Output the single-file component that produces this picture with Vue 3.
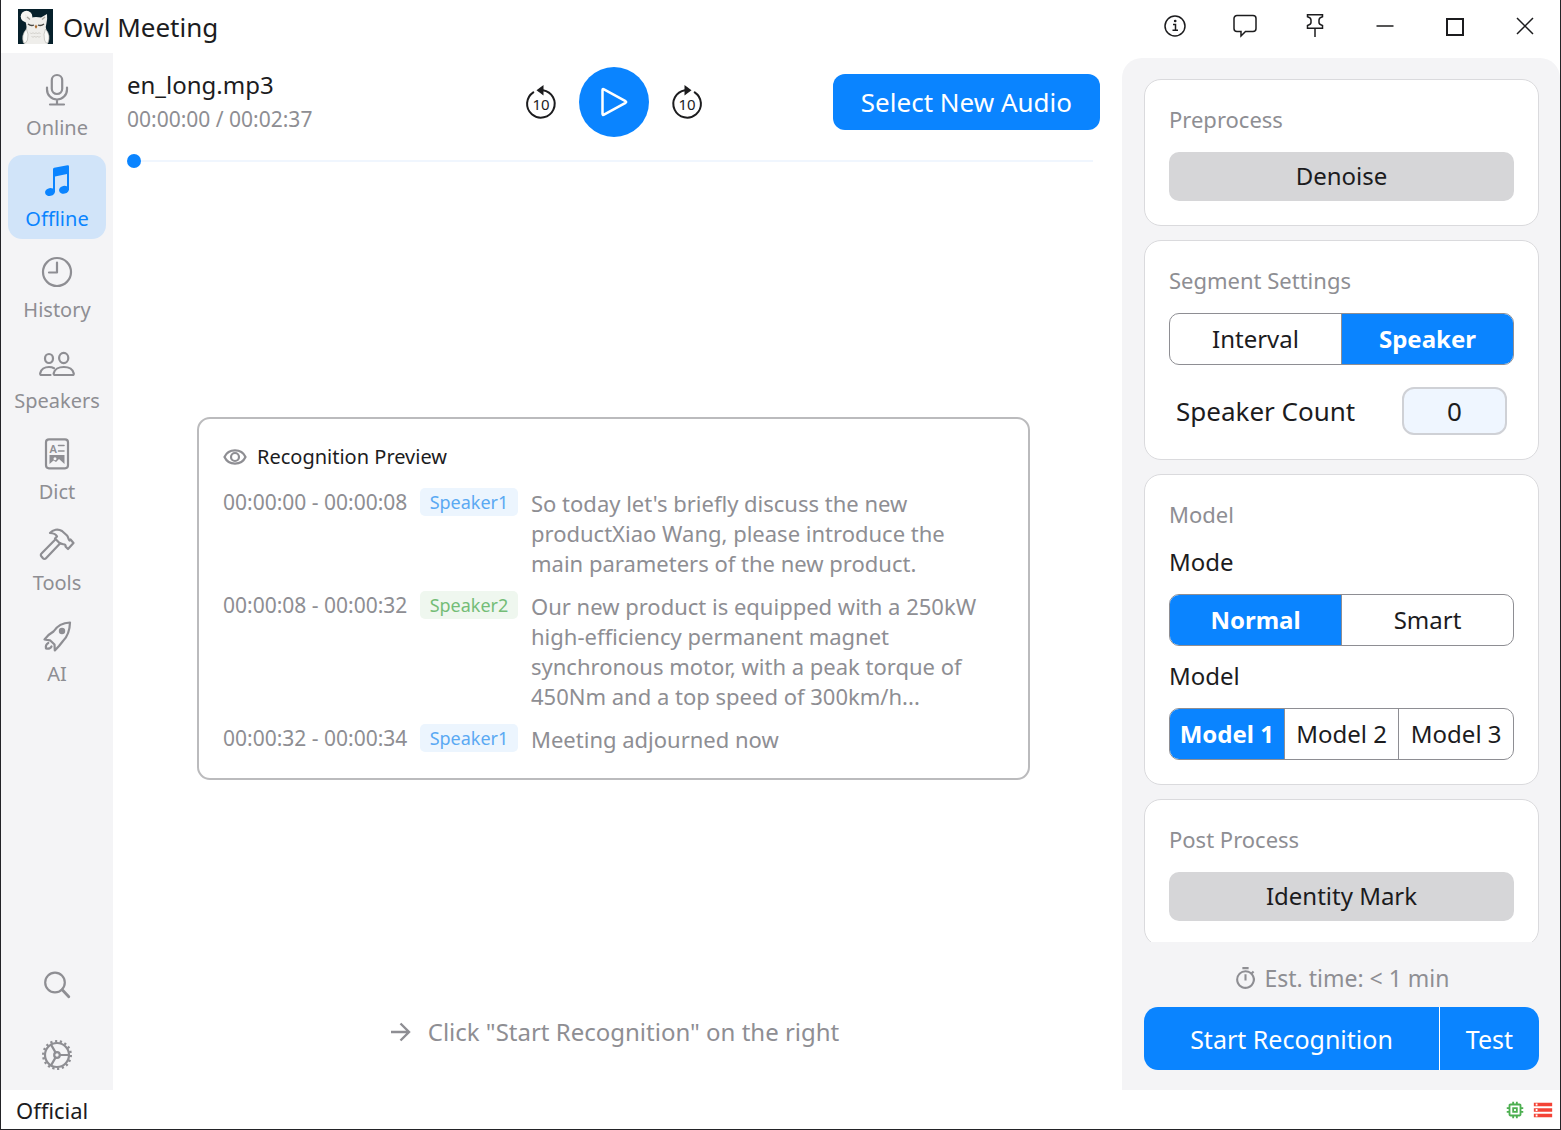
<script setup>
import { ref } from 'vue'

const navItems = ['Online', 'Offline', 'History', 'Speakers', 'Dict', 'Tools', 'AI']
const activeNav = ref('Offline')

const segments = [
  { time: '00:00:00 - 00:00:08', speaker: 'Speaker1', tone: 'blue', text: "So today let's briefly discuss the new productXiao Wang, please introduce the main parameters of the new product." },
  { time: '00:00:08 - 00:00:32', speaker: 'Speaker2', tone: 'green', text: 'Our new product is equipped with a 250kW high-efficiency permanent magnet synchronous motor, with a peak torque of 450Nm and a top speed of 300km/h...' },
  { time: '00:00:32 - 00:00:34', speaker: 'Speaker1', tone: 'blue', text: 'Meeting adjourned now' },
]

const position = ref(0)
const splitBy = ref('Speaker')
const mode = ref('Normal')
const model = ref('Model 1')
const speakerCount = ref('0')
</script>

<template>
  <div class="window">
    <header class="titlebar">
      <svg class="logo" viewBox="0 0 35 35" aria-hidden="true">
        <rect width="35" height="35" fill="#06202b" />
        <circle cx="8.5" cy="7.5" r="5.8" fill="#f6f5f1" />
        <path d="M7 5 L13 8.500 Q18 7.500 23 8.500 L29 5 Q29.500 10 28.500 14 Q27 18 28.500 22 Q31.500 28 29.500 35 H6.500 Q4 28 7.500 22 Q9.500 18 7.500 13 Q6.500 9 7 5Z" fill="#efeeeb" />
        <path d="M8.500 20 Q3 26 5.500 34 Q8 35 9.500 31 Q11 25 8.500 20Z M27.500 20 Q33 26 30 34 Q27.500 35 26.500 31 Q25 25 27.500 20Z" fill="#fafaf8" stroke="#b9b8b2" stroke-width=".7" />
        <path d="M9 8 L12 10.500 M27 8 L24 10.500" stroke="#aaa79f" stroke-width="1.300" />
        <path d="M10 15 q3 2.400 6 1 M20 16 q3 1.400 6-1" fill="none" stroke="#484844" stroke-width="1.300" />
        <path d="M18 15.500 l1.300 2.200 -1.300 2 -1.300-2z" fill="#aa6a2c" />
        <path d="M12 23.500 l1.500 1.500 1.500-1.500 1.500 1.500 1.500-1.500 1.500 1.500 1.500-1.500 1.500 1.500 M13.500 27 l1.500 1.500 1.500-1.500 1.500 1.500 1.500-1.500 1.500 1.500 1.500-1.500" fill="none" stroke="#c9c7c2" stroke-width=".8" />
      </svg>
      <h1>Owl Meeting</h1>
      <div class="window-tools">
        <button type="button" aria-label="About">
          <svg viewBox="0 0 24 24"><circle cx="12" cy="12" r="10" /><path d="M10 10.500h2.500v5.500M9.500 16.200h5.500" /><circle cx="12.200" cy="7" r=".6" fill="currentColor" /></svg>
        </button>
        <button type="button" aria-label="Feedback">
          <svg viewBox="0 0 24 24"><path d="M4 1.500h16a3 3 0 0 1 3 3v10a3 3 0 0 1-3 3h-7.500L8 22v-4.500H4a3 3 0 0 1-3-3v-10a3 3 0 0 1 3-3z" /></svg>
        </button>
        <button type="button" aria-label="Pin">
          <svg viewBox="0 0 24 24"><path d="M4.500 .8h15v2q-3.500 1-3.500 3.200v2.500q0 2 3.500 3v2.800h-15v-2.800q3.500-1 3.500-3V6q0-2.200-3.500-3.200zM12 14.300V23" /></svg>
        </button>
        <button type="button" aria-label="Minimize">
          <svg viewBox="0 0 24 24"><path d="M3.500 12h17" /></svg>
        </button>
        <button type="button" aria-label="Maximize">
          <svg viewBox="0 0 24 24"><rect x="4" y="5" width="16" height="16" stroke-width="2" /></svg>
        </button>
        <button type="button" aria-label="Close">
          <svg viewBox="0 0 24 24"><path d="M4 4l16 16M20 4L4 20" /></svg>
        </button>
      </div>
    </header>

    <div class="body">
      <nav class="sidebar">
        <button
          v-for="item in navItems"
          :key="item"
          type="button"
          class="nav-item"
          :class="{ active: item === activeNav }"
          @click="activeNav = item"
        >
          <svg viewBox="0 0 36 36" aria-hidden="true">
            <g v-if="item === 'Online'">
              <rect x="12.800" y="3" width="10.400" height="19" rx="5.200" />
              <path d="M8 15.500v2a10 10 0 0 0 20 0v-2M18 27.500v5M11 32.500h14" />
            </g>
            <g v-else-if="item === 'Offline'" class="solid">
              <path d="M14 6.200Q14 5 15.200 4.800L28.500 2.300Q30 2 30 3.500V27H28V11L16 13.500V29H14z" />
              <ellipse cx="11" cy="29" rx="5" ry="3.900" transform="rotate(-12 11 29)" />
              <ellipse cx="25" cy="26.700" rx="5" ry="3.900" transform="rotate(-12 25 26.700)" />
            </g>
            <g v-else-if="item === 'History'">
              <circle cx="18" cy="18" r="14" />
              <path d="M18 8.500v10h-8" />
            </g>
            <g v-else-if="item === 'Speakers'">
              <ellipse cx="24.700" cy="13" rx="4.600" ry="5.100" />
              <ellipse cx="10" cy="13.500" rx="4" ry="4.500" />
              <path d="M16.200 30H33.500q1.500 0 1.200-1.800C33.800 24.500 30 22 24.800 22s-9.300 2.500-10.100 6.200q-.2 1.800 1.500 1.800z" />
              <path d="M11.500 30H2.500q-1.500 0-1.300-1.800C2 24.500 5.500 22 10 22c2.200 0 3.500.3 5 1.200" />
            </g>
            <g v-else-if="item === 'Dict'">
              <rect x="7" y="3.300" width="22" height="29" rx="3" />
              <text x="10.500" y="16.500" class="glyph">A</text>
              <path d="M19.500 9.500h5.500M19.500 15h5.500" stroke-width="1.600" />
              <path class="solid" fill-rule="evenodd" d="M10.500 19h15v9l-5.500-5-3 3-2.500-1.500L10.500 28zM16 21.300a1.500 1.500 0 1 0 0 3 1.500 1.500 0 1 0 0-3z" />
            </g>
            <g v-else-if="item === 'Tools'">
              <path d="M11 6C14 2.500 19 1.500 23 4l5 4.500c1.500 1.700 1 3.500 2.500 5l1-1 3 3.500-5.500 6-2.500-2.500c1-3-3-1.500-6-3.500L16 11.500l2-2C17 7 14.500 6.200 11 6z" />
              <path d="M16.300 12.500L2.500 26.500a2 2 0 0 0 0 3l1.500 1.800a2 2 0 0 0 3 0L21 16.500" />
            </g>
            <g v-else>
              <path d="M31 4.500C24 4.700 18.500 7.300 14.500 13.500L9.500 17 5.500 21.500l5.500.8 4.500 4.200.3 6 4.200-4.500 4-5C28.500 18.500 30.800 12 31 4.500z" />
              <circle class="solid" cx="23" cy="13" r="3.200" />
              <path d="M9.300 25c-2 1-2.800 3-2.300 5.500 2.500.5 4.500 0 5.500-2" />
            </g>
          </svg>
          <span>{{ item }}</span>
        </button>

        <div class="nav-bottom">
          <button type="button" class="nav-tool" aria-label="Search">
            <svg viewBox="0 0 36 36"><circle cx="16" cy="15.500" r="9.800" /><path d="M23.200 22.700l6.600 7" stroke-width="2.800" /></svg>
          </button>
          <button type="button" class="nav-tool" aria-label="Settings">
            <svg viewBox="0 0 36 36">
              <circle cx="18" cy="18" r="12" />
              <circle cx="18" cy="18" r="13.800" stroke-width="2.400" stroke-dasharray="2.200 2.617" stroke-linecap="butt" />
              <circle cx="18" cy="18" r="2.800" />
              <path d="M21 18h9M16.500 15.400L12 7.600M16.500 20.600L12 28.400" />
            </svg>
          </button>
        </div>
      </nav>

      <main class="main">
        <section class="player">
          <div class="track-info">
            <h2>en_long.mp3</h2>
            <p>00:00:00 / 00:02:37</p>
          </div>
          <div class="transport">
            <button type="button" class="skip" aria-label="Back 10 seconds">
              <svg viewBox="0 0 34 36">
                <path d="M19 6.200A13.800 13.800 0 1 1 9.300 8.300" />
                <path class="solid" d="M19.500 1v10.500L12.500 6.200z" />
                <text x="17" y="25.500" text-anchor="middle">10</text>
              </svg>
            </button>
            <button type="button" class="play" aria-label="Play">
              <svg viewBox="0 0 36 36"><path d="M6.500 6.200Q6.500 4.500 8 5.300L29.500 17.200q1.300.8 0 1.600L8 30.700Q6.500 31.500 6.500 29.800z" /></svg>
            </button>
            <button type="button" class="skip" aria-label="Forward 10 seconds">
              <svg viewBox="0 0 34 36">
                <path d="M15 6.200A13.800 13.800 0 1 0 24.700 8.300" />
                <path class="solid" d="M14.500 1v10.500l7-5.300z" />
                <text x="17" y="25.500" text-anchor="middle">10</text>
              </svg>
            </button>
          </div>
          <button type="button" class="select-audio">Select New Audio</button>
        </section>
        <input v-model="position" class="seek" type="range" min="0" max="157" aria-label="Playback position" />

        <div class="stage">
          <section class="preview">
            <h3>
              <svg viewBox="0 0 24 24" aria-hidden="true"><path d="M1.500 12C5.500 3.200 18.500 3.200 22.500 12 18.500 20.800 5.500 20.800 1.500 12z" /><circle cx="12" cy="12" r="4" /></svg>
              Recognition Preview
            </h3>
            <div v-for="segment in segments" :key="segment.time" class="segment">
              <time>{{ segment.time }}</time>
              <span class="chip" :class="segment.tone">{{ segment.speaker }}</span>
              <p>{{ segment.text }}</p>
            </div>
          </section>
        </div>

        <p class="hint">
          <svg viewBox="0 0 24 24" aria-hidden="true"><path d="M3 12h17.500M12.500 3.500l8.500 8.500-8.500 8.500" /></svg>
          Click "Start Recognition" on the right
        </p>
      </main>

      <aside class="panel">
        <div class="cards">
          <section class="card">
            <h3>Preprocess</h3>
            <button type="button" class="toggle">Denoise</button>
          </section>

          <section class="card">
            <h3>Segment Settings</h3>
            <div class="segmented" role="group" aria-label="Segment by">
              <button v-for="o in ['Interval', 'Speaker']" :key="o" type="button" :aria-pressed="splitBy === o" @click="splitBy = o">{{ o }}</button>
            </div>
            <div class="count-row">
              <label for="speaker-count">Speaker Count</label>
              <input id="speaker-count" v-model="speakerCount" type="text" inputmode="numeric" />
            </div>
          </section>

          <section class="card">
            <h3>Model</h3>
            <h4>Mode</h4>
            <div class="segmented" role="group" aria-label="Mode">
              <button v-for="o in ['Normal', 'Smart']" :key="o" type="button" :aria-pressed="mode === o" @click="mode = o">{{ o }}</button>
            </div>
            <h4>Model</h4>
            <div class="segmented" role="group" aria-label="Model">
              <button v-for="o in ['Model 1', 'Model 2', 'Model 3']" :key="o" type="button" :aria-pressed="model === o" @click="model = o">{{ o }}</button>
            </div>
          </section>

          <section class="card">
            <h3>Post Process</h3>
            <button type="button" class="toggle">Identity Mark</button>
          </section>
        </div>

        <div class="run">
          <p>
            <svg viewBox="0 0 24 24" aria-hidden="true"><path d="M15 1H9v2h6V1zm-4 13h2V8h-2v6zm8.030-6.610 1.420-1.420c-.43-.51-.9-.99-1.410-1.410l-1.420 1.420A8.962 8.962 0 0 0 12 4a9 9 0 0 0-9 9c0 4.970 4.020 9 9 9a8.994 8.994 0 0 0 7.030-14.610zM12 20c-3.870 0-7-3.130-7-7s3.130-7 7-7 7 3.130 7 7-3.130 7-7 7z" /></svg>
            Est. time: &lt; 1 min
          </p>
          <div class="run-buttons">
            <button type="button" class="start">Start Recognition</button>
            <button type="button" class="test">Test</button>
          </div>
        </div>
      </aside>
    </div>

    <footer class="status">
      <span>Official</span>
      <div class="status-icons">
        <svg viewBox="0 0 24 24" fill="#4caf50" aria-hidden="true"><path d="M15 9H9v6h6V9zm-2 4h-2v-2h2v2zm8-2V9h-2V7c0-1.100-.9-2-2-2h-2V3h-2v2h-2V3H9v2H7c-1.100 0-2 .9-2 2v2H3v2h2v2H3v2h2v2c0 1.100.9 2 2 2h2v2h2v-2h2v2h2v-2h2c1.100 0 2-.9 2-2v-2h2v-2h-2v-2h2zm-4 6H7V7h10v10z" /></svg>
        <svg viewBox="0 0 24 24" fill="#f44336" aria-hidden="true"><path d="M2 20h20v-4H2v4zm2-3h2v2H4v-2zM2 4v4h20V4H2zm4 3H4V5h2v2zm-4 7h20v-4H2v4zm2-3h2v2H4v-2z" /></svg>
      </div>
    </footer>
  </div>
</template>

<style>
body {
  margin: 0;
}
</style>

<style scoped>
.window {
  --blue: #0a84ff;
  --gray: #8e8e93;
  --ink: #1c1c1e;
  --surface: #f4f4f6;
  display: flex;
  flex-direction: column;
  box-sizing: border-box;
  height: 100vh;
  border: solid #232327;
  border-width: 0 1px 1px;
  background: #fff;
  color: var(--ink);
  font-family: 'Noto Sans', 'Open Sans', sans-serif;
  font-size: 22px;
}

h1, h2, h3, h4, p {
  margin: 0;
  font-weight: 400;
}

button {
  padding: 0;
  border: 0;
  background: none;
  color: inherit;
  font: inherit;
  cursor: pointer;
}

svg {
  display: block;
  flex: none;
}

.solid {
  fill: currentColor;
  stroke: none;
}

/* Title bar */
.titlebar {
  display: flex;
  flex: none;
  align-items: center;
  height: 53px;
  padding-left: 17px;
}

.logo {
  width: 35px;
  height: 35px;
}

.titlebar h1 {
  margin-left: 10px;
  font-size: 26px;
  line-height: 36px;
}

.window-tools {
  display: flex;
  align-self: flex-start;
  margin-left: auto;
}

.window-tools button {
  display: grid;
  place-items: center;
  width: 70px;
  height: 52px;
}

.window-tools svg {
  width: 24px;
  height: 24px;
  fill: none;
  stroke: currentColor;
  stroke-width: 1.5;
}

.body {
  display: flex;
  flex: 1;
  min-height: 0;
}

/* Sidebar */
.sidebar {
  display: flex;
  flex: none;
  flex-direction: column;
  gap: 7px;
  box-sizing: border-box;
  width: 112px;
  padding: 11px 7px 0;
  background: var(--surface);
  color: var(--gray);
}

.sidebar svg {
  width: 36px;
  height: 36px;
  fill: none;
  stroke: currentColor;
  stroke-width: 2.2;
  stroke-linecap: round;
  stroke-linejoin: round;
}

.sidebar .solid {
  fill: currentColor;
  stroke: none;
}

.sidebar .glyph {
  fill: currentColor;
  stroke: none;
  font-size: 11px;
  font-weight: 600;
}

.nav-item {
  display: flex;
  flex-direction: column;
  align-items: center;
  gap: 6px;
  height: 84px;
  padding-top: 8px;
  border-radius: 14px;
  font-size: 20px;
  line-height: 28px;
}

.nav-item.active {
  background: #d1e4f9;
  color: var(--blue);
}

.nav-bottom {
  display: flex;
  flex-direction: column;
  margin-top: auto;
}

.nav-tool {
  display: grid;
  place-items: center;
  height: 70px;
}

/* Player */
.main {
  display: flex;
  flex: 1;
  flex-direction: column;
  min-width: 0;
  padding: 14px 22px 40px 14px;
}

.player {
  display: grid;
  grid-template-columns: 1fr auto 1fr;
  align-items: center;
}

.track-info h2 {
  font-size: 24px;
  line-height: 34px;
}

.track-info p {
  color: var(--gray);
  font-size: 21px;
  line-height: 34px;
}

.transport {
  display: flex;
  align-items: center;
  gap: 21px;
}

.skip svg {
  width: 34px;
  height: 36px;
  fill: none;
  stroke: currentColor;
  stroke-width: 2;
  stroke-linecap: round;
}

.skip .solid {
  fill: currentColor;
}

.skip text {
  fill: currentColor;
  stroke: none;
  font-size: 15px;
}

.play {
  display: grid;
  place-items: center;
  width: 70px;
  height: 70px;
  border-radius: 50%;
  background: var(--blue);
  color: #fff;
}

.play svg {
  width: 36px;
  height: 36px;
  fill: none;
  stroke: currentColor;
  stroke-width: 2.5;
}

.select-audio {
  justify-self: end;
  height: 56px;
  padding: 0 28px;
  border-radius: 12px;
  background: var(--blue);
  color: #fff;
  font-size: 26px;
}

.seek {
  appearance: none;
  height: 14px;
  margin: 17px 7px 0 0;
  background: linear-gradient(#f0f6fe, #f0f6fe) center / 100% 2px no-repeat;
}

.seek::-webkit-slider-thumb {
  appearance: none;
  width: 14px;
  height: 14px;
  border-radius: 50%;
  background: var(--blue);
}

/* Preview */
.stage {
  display: flex;
  flex: 1;
  align-items: center;
  padding: 15px 70px 0;
}

.preview {
  flex: 1;
  padding: 24px;
  border: 2px solid #bbbbbd;
  border-radius: 13px;
}

.preview h3 {
  display: flex;
  align-items: center;
  gap: 10px;
  margin-bottom: 17px;
  font-size: 20px;
  line-height: 28px;
}

.preview h3 svg {
  width: 24px;
  height: 24px;
  fill: none;
  stroke: var(--gray);
  stroke-width: 2.2;
}

.segment {
  display: grid;
  grid-template-columns: 184px 98px 1fr;
  column-gap: 13px;
  align-items: start;
  color: var(--gray);
  line-height: 30px;
}

.segment + .segment {
  margin-top: 13px;
}

.segment time {
  font-size: 21px;
  line-height: 28px;
  white-space: nowrap;
}

.segment p {
  padding-right: 14px;
}

.chip {
  border-radius: 5px;
  font-size: 18px;
  line-height: 28px;
  text-align: center;
}

.chip.blue {
  background: #ecf5fe;
  color: #5aa9f3;
}

.chip.green {
  background: #eff7ef;
  color: #74bd77;
}

.hint {
  display: flex;
  align-items: center;
  justify-content: center;
  gap: 16px;
  color: var(--gray);
  font-size: 24px;
  line-height: 36px;
}

.hint svg {
  width: 24px;
  height: 24px;
  fill: none;
  stroke: currentColor;
  stroke-width: 2.4;
}

/* Settings panel */
.panel {
  display: flex;
  flex: none;
  flex-direction: column;
  box-sizing: border-box;
  width: 438px;
  margin-top: 5px;
  padding: 0 21px 0 22px;
  border-radius: 20px 20px 0 0;
  background: var(--surface);
}

.cards {
  display: flex;
  flex: 1;
  flex-direction: column;
  gap: 14px;
  min-height: 0;
  padding-top: 21px;
  overflow-y: auto;
  scrollbar-width: none;
}

.card {
  display: flex;
  flex: none;
  flex-direction: column;
  padding: 24px;
  border: 1px solid #dadadd;
  border-radius: 17px;
  background: #fff;
}

.card h3 {
  margin-bottom: 18px;
  color: var(--gray);
  font-size: 22px;
  line-height: 30px;
}

.card h4 {
  margin-bottom: 17px;
  font-size: 24px;
  line-height: 30px;
}

.segmented + h4 {
  margin-top: 15px;
}

.toggle {
  height: 49px;
  padding-bottom: 2px;
  border-radius: 10px;
  background: #d6d6d8;
  font-size: 24px;
}

.segmented {
  display: flex;
  box-sizing: border-box;
  height: 52px;
  overflow: hidden;
  border: 1px solid var(--gray);
  border-radius: 10px;
  font-size: 24px;
}

.segmented button {
  flex: 1 1 0;
  min-width: 0;
  padding-bottom: 2px;
  white-space: nowrap;
}

.segmented button + button {
  border-left: 1px solid var(--gray);
}

.segmented button[aria-pressed='true'] {
  background: var(--blue);
  color: #fff;
  font-weight: 700;
}

.count-row {
  display: flex;
  align-items: center;
  justify-content: space-between;
  margin-top: 22px;
  padding: 0 7px;
  font-size: 26px;
}

.count-row input {
  box-sizing: border-box;
  width: 105px;
  height: 48px;
  padding: 0;
  border: 2px solid #cfd1d6;
  border-radius: 12px;
  background: #eff6ff;
  color: inherit;
  font: inherit;
  text-align: center;
}

.run {
  flex: none;
  padding: 21px 0 20px;
}

.run p {
  display: flex;
  align-items: center;
  justify-content: center;
  gap: 6px;
  margin-bottom: 14px;
  color: var(--gray);
  font-size: 23px;
  line-height: 30px;
}

.run p svg {
  width: 25px;
  height: 25px;
  fill: currentColor;
}

.run-buttons {
  display: flex;
  gap: 1px;
  overflow: hidden;
  border-radius: 14px;
  background: #fff;
  color: #fff;
  font-size: 25px;
}

.run-buttons button {
  height: 63px;
  background: var(--blue);
}

.start {
  flex: 1;
}

.test {
  width: 99px;
}

/* Status bar */
.status {
  display: flex;
  flex: none;
  align-items: center;
  justify-content: space-between;
  height: 39px;
  padding: 0 6px 0 15px;
}

.status-icons {
  display: flex;
  gap: 6px;
}

.status-icons svg {
  width: 22px;
  height: 22px;
}
</style>
